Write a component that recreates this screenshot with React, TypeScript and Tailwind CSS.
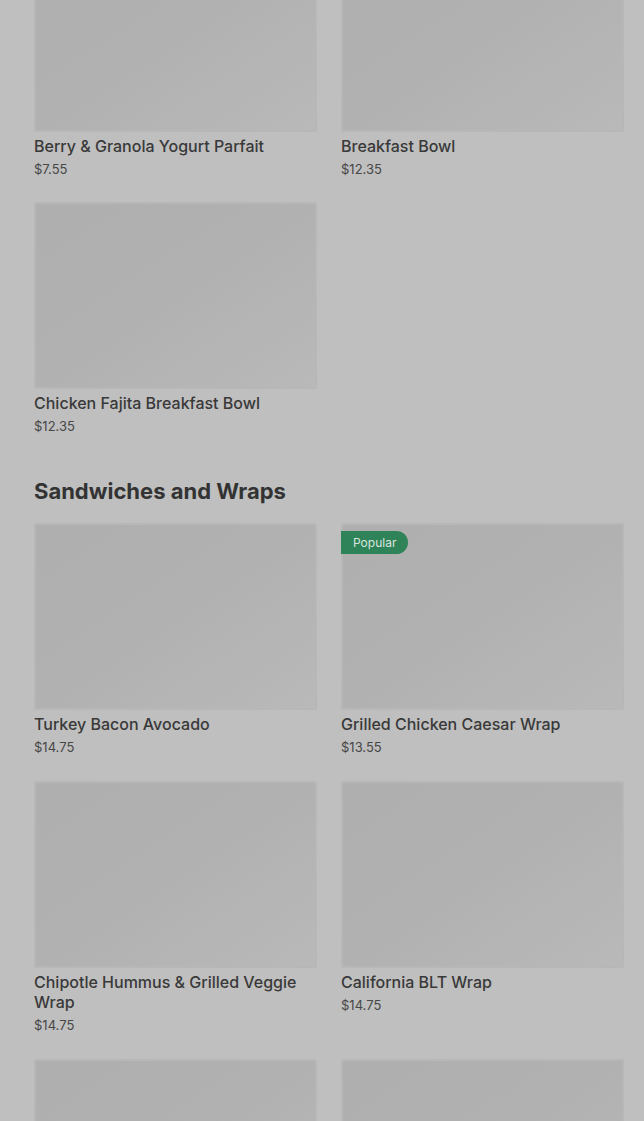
import React from "react";

type Item = { name: string; price: string; popular?: boolean };

const breakfast: Item[] = [
  { name: "Berry & Granola Yogurt Parfait", price: "$7.55" },
  { name: "Breakfast Bowl", price: "$12.35" },
  { name: "Chicken Fajita Breakfast Bowl", price: "$12.35" },
];

const sandwiches: Item[] = [
  { name: "Turkey Bacon Avocado", price: "$14.75" },
  { name: "Grilled Chicken Caesar Wrap", price: "$13.55", popular: true },
  { name: "Chipotle Hummus & Grilled Veggie Wrap", price: "$14.75" },
  { name: "California BLT Wrap", price: "$14.75" },
  { name: "", price: "" },
  { name: "", price: "" },
];

function Card({ item }: { item: Item }) {
  return (
    <div className="flex flex-col pb-[1px]">
      <div className="relative h-[187px] w-full rounded-[2px] border-2 border-[#b7b7b7] bg-gradient-to-br from-[#afafaf] via-[#b1b1b1] to-[#b9b9b9]">
        {item.popular && (
          <div className="absolute left-[-2px] top-[6px] flex h-[23px] items-center rounded-r-full bg-[#2f8358] pl-3 pr-3 text-[12px] text-[#d9e6df]">
            Popular
          </div>
        )}
      </div>
      {item.name && (
        <>
          <div className="mt-[4px] text-[16px] font-medium leading-5 text-[#393939]">{item.name}</div>
          <div className="mt-[4px] text-[13px] leading-[18px] text-[#474747]">{item.price}</div>
        </>
      )}
    </div>
  );
}

export default function App() {
  return (
    <div
      className="min-h-[1121px] w-[644px] overflow-hidden bg-[#bfbfbf]"
      style={{ fontFamily: "Inter, 'Noto Sans', sans-serif" }}
    >
      <div className="-mt-[55px] pl-[34px] pr-[20px]">
        <div className="grid grid-cols-2 gap-x-6 gap-y-[23px]">
          {breakfast.map((it, i) => (
            <Card key={i} item={it} />
          ))}
        </div>
        <h2 className="mt-[41px] mb-[18px] text-[22px] font-bold leading-7 text-[#333333]">
          Sandwiches and Wraps
        </h2>
        <div className="grid grid-cols-2 gap-x-6 gap-y-6">
          {sandwiches.map((it, i) => (
            <Card key={i} item={it} />
          ))}
        </div>
      </div>
    </div>
  );
}
